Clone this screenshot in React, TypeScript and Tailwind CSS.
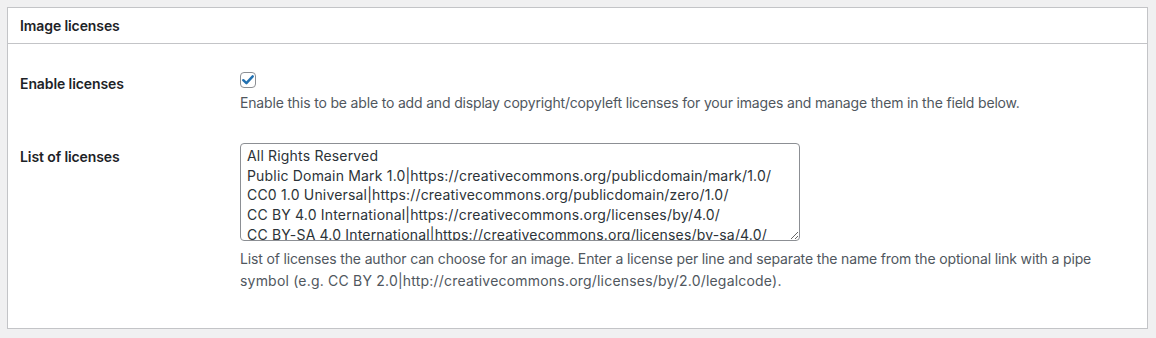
import React from 'react';

const licenses = [
  'All Rights Reserved',
  'Public Domain Mark 1.0|https://creativecommons.org/publicdomain/mark/1.0/',
  'CC0 1.0 Universal|https://creativecommons.org/publicdomain/zero/1.0/',
  'CC BY 4.0 International|https://creativecommons.org/licenses/by/4.0/',
  'CC BY-SA 4.0 International|https://creativecommons.org/licenses/by-sa/4.0/',
  'CC BY-ND 4.0 International|https://creativecommons.org/licenses/by-nd/4.0/',
  'CC BY-NC 4.0 International|https://creativecommons.org/licenses/by-nc/4.0/',
].join('\n');

const font = { fontFamily: 'Inter, "Noto Sans", sans-serif' };

export default function App() {
  return (
    <div className="w-[1156px] h-[338px] bg-[#f0f0f1] pt-[7px] pl-[7px]" style={font}>
      <div className="w-[1141px] h-[322px] bg-white border border-[#c3c4c7]">
        {/* Kepala panel */}
        <div className="h-[36px] border-b border-[#c3c4c7] px-[12px] flex items-center">
          <h2 className="text-[14px] font-semibold text-[#1d2327] tracking-[-0.1px]">Image licenses</h2>
        </div>

        <div className="pt-[11px] pl-[12px] pr-[12px]">
          {/* Baris: aktifkan lisensi */}
          <div className="flex">
            <div className="w-[210px] shrink-0 pt-[20px] pr-[10px]">
              <span className="block text-[14px] leading-[18px] font-semibold text-[#1d2327] tracking-[-0.1px]">Enable licenses</span>
            </div>
            <div className="flex-1 py-[15px] px-[10px]">
              <div className="h-[16px] w-[16px] mt-[2px] rounded-[4px] border border-[#8c8f94] bg-white flex items-center justify-center">
                <svg viewBox="0 0 16 16" className="h-[14px] w-[14px]">
                  <path d="M2.6 8.2 L6.2 11.6 L13.4 3.8" fill="none" stroke="#2271b1" strokeWidth="2.8" strokeLinecap="round" strokeLinejoin="round" />
                </svg>
              </div>
              <p className="mt-[4px] text-[14px] leading-[21px] text-[#50575e] tracking-[-0.17px]">
                Enable this to be able to add and display copyright/copyleft licenses for your images and manage them in the field below.
              </p>
            </div>
          </div>

          {/* Baris: daftar lisensi */}
          <div className="flex">
            <div className="w-[210px] shrink-0 pt-[20px] pr-[10px]">
              <span className="block text-[14px] leading-[18px] font-semibold text-[#1d2327] tracking-[-0.1px]">List of licenses</span>
            </div>
            <div className="flex-1 py-[15px] px-[10px]">
              <textarea
                readOnly
                value={licenses}
                className="block w-[560px] h-[98px] overflow-hidden rounded-[4px] border border-[#8c8f94] px-[6px] py-[2px] text-[14px] leading-[19.7px] text-[#2c3338] tracking-[0.18px] outline-none"
                style={font}
              />
              <p className="mt-[7px] text-[14px] leading-[22px] text-[#50575e] tracking-[-0.15px]">
                List of licenses the author can choose for an image. Enter a license per line and separate the name from the optional link with a pipe
                <br />
                <span className="tracking-[0.2px]">symbol (e.g. CC BY 2.0|http://creativecommons.org/licenses/by/2.0/legalcode).</span>
              </p>
            </div>
          </div>
        </div>
      </div>
    </div>
  );
}
